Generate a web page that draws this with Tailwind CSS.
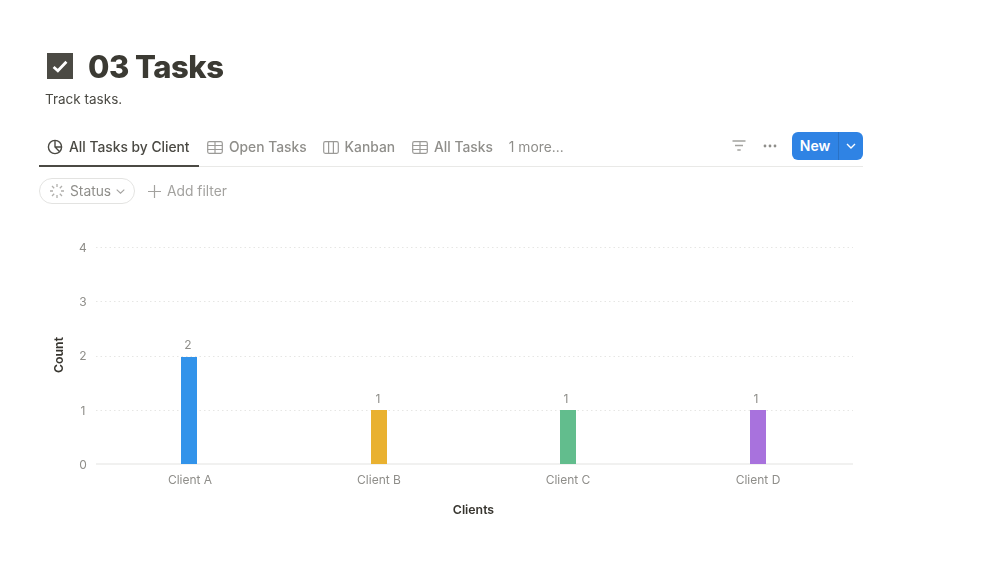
<!DOCTYPE html>
<html lang="en">
<head>
  <meta charset="UTF-8" />
  <meta name="viewport" content="width=device-width, initial-scale=1.0" />
  <title>03 Tasks</title>
  <script src="https://cdn.jsdelivr.net/npm/@tailwindcss/browser@4"></script>
</head>
<body class="bg-white font-['Inter',sans-serif] text-[#37352f] h-[566px] w-[1005px] overflow-hidden">
  <div class="w-[824px] ml-[39px] pt-[47px] blur-[0.4px]">

    <!-- title -->
    <div class="flex items-center h-[38px] pl-[8px] gap-[15px]">
      <div class="w-[26px] h-[26px] bg-[#4b4a44] flex items-center justify-center">
        <svg width="18" height="15" viewBox="0 0 16 14" fill="none" stroke="#fff" stroke-width="2.6"><path d="M2 7.5 L6 11 L14 2.5" /></svg>
      </div>
      <h1 class="text-[31px] font-extrabold leading-none tracking-[-0.5px] text-[#3b3a33]">03 Tasks</h1>
    </div>
    <p class="text-[13.5px] leading-5 ml-[6px] mt-[4px] text-[#4a4943]">Track tasks.</p>

    <!-- tabs -->
    <div class="flex items-center justify-between h-[38px] mt-[20px] border-b border-[#e9e9e7]">
      <div class="flex items-center h-full text-[13.8px] text-[#8f8e8a] font-medium">
        <div class="flex items-center gap-[6px] h-full w-[160px] pl-[8px] border-b-2 border-[#4b4a44] text-[#4a4943] mb-[-1px]">
          <svg width="16" height="16" viewBox="0 0 16 16" fill="none" stroke="#4a4943" stroke-width="1.4"><circle cx="8" cy="8" r="6.6" /><path d="M8 1.4 V8 L12.7 12.7 M8 8 H14.6" /></svg>
          <span>All Tasks by Client</span>
        </div>
        <div class="flex items-center gap-[6px] ml-[8px]">
          <svg width="16" height="13" viewBox="0 0 16 13" fill="none" stroke="#9b9a97" stroke-width="1.2"><rect x="0.7" y="0.7" width="14.6" height="11.6" rx="1.5" /><path d="M0.7 4.5 H15.3 M0.7 8.5 H15.3 M8 0.7 V12.3" /></svg>
          <span>Open Tasks</span>
        </div>
        <div class="flex items-center gap-[6px] ml-[16px]">
          <svg width="16" height="13" viewBox="0 0 16 13" fill="none" stroke="#9b9a97" stroke-width="1.2"><rect x="0.7" y="0.7" width="14.6" height="11.6" rx="1.5" /><path d="M5.6 0.7 V12.3 M10.4 0.7 V12.3" /></svg>
          <span>Kanban</span>
        </div>
        <div class="flex items-center gap-[6px] ml-[17px]">
          <svg width="16" height="13" viewBox="0 0 16 13" fill="none" stroke="#9b9a97" stroke-width="1.2"><rect x="0.7" y="0.7" width="14.6" height="11.6" rx="1.5" /><path d="M0.7 4.5 H15.3 M0.7 8.5 H15.3 M8 0.7 V12.3" /></svg>
          <span>All Tasks</span>
        </div>
        <span class="ml-[16px] font-normal">1 more...</span>
      </div>

      <div class="flex items-center mb-[4px]">
        <svg width="14" height="11" viewBox="0 0 14 11" fill="none" stroke="#a3a29f" stroke-width="1.3"><path d="M0.5 1 H13.5 M3 5.5 H11 M5.3 10 H8.7" /></svg>
        <svg class="ml-[17px]" width="14" height="4" viewBox="0 0 14 4" fill="#8f8e8a"><circle cx="2" cy="2" r="1.4" /><circle cx="7" cy="2" r="1.4" /><circle cx="12" cy="2" r="1.4" /></svg>
        <div class="flex h-[28px] ml-[15px] rounded-[6px] bg-[#2f83e4] text-white">
          <div class="w-[47px] flex items-center justify-center text-[14px] font-semibold border-r border-[#2a72c6]">New</div>
          <div class="w-[24px] flex items-center justify-center">
            <svg width="10" height="6" viewBox="0 0 10 6" fill="none" stroke="#fff" stroke-width="1.4"><path d="M1 1 L5 5 L9 1" /></svg>
          </div>
        </div>
      </div>
    </div>

    <!-- filters -->
    <div class="flex items-center mt-[11px] h-[26px] text-[13.8px] text-[#9b9a97]">
      <div class="flex items-center h-[26px] w-[96px] pl-[9px] gap-[5px] rounded-full border border-[#e3e3e1]">
        <svg width="16" height="16" viewBox="0 0 16 16" fill="none" stroke="#b0afac" stroke-width="1.3"><path d="M8 1 V4 M8 12 V15 M1 8 H4 M12 8 H15 M3 3 L5.2 5.2 M10.8 10.8 L13 13 M3 13 L5.2 10.8 M10.8 5.2 L13 3" /></svg>
        <span class="text-[#8f8e8a]">Status</span>
        <svg width="9" height="5" viewBox="0 0 9 5" fill="none" stroke="#a3a29f" stroke-width="1.1"><path d="M0.7 0.7 L4.5 4.2 L8.3 0.7" /></svg>
      </div>
      <div class="flex items-center ml-[13px] gap-[6px] text-[#a3a29f]">
        <svg width="13" height="13" viewBox="0 0 13 13" fill="none" stroke="#a3a29f" stroke-width="1.2"><path d="M6.5 0 V13 M0 6.5 H13" /></svg>
        <span>Add filter</span>
      </div>
    </div>

    <!-- chart -->
    <svg class="block ml-[-39px] mt-[26px]" width="900" height="320" viewBox="0 230 900 320" font-family="Inter, sans-serif">
      <g stroke="#e6e6e4" stroke-width="1" stroke-dasharray="1.5 3">
        <path d="M96 247.5 H853 M96 301.5 H853 M96 356.5 H853 M96 410.5 H853" />
      </g>
      <path d="M96 464 H853" stroke="#e3e3e1" stroke-width="1.2" />

      <g font-size="12" fill="#8f8e8a" text-anchor="middle">
        <text x="83" y="252">4</text>
        <text x="83" y="306">3</text>
        <text x="83" y="360">2</text>
        <text x="83" y="415">1</text>
        <text x="83" y="469">0</text>
      </g>

      <rect x="181" y="357" width="16" height="107" fill="#3293ea" />
      <rect x="371" y="410" width="16" height="54" fill="#e9b130" />
      <rect x="560" y="410" width="16" height="54" fill="#62bd8d" />
      <rect x="750" y="410" width="16" height="54" fill="#a872dd" />

      <g font-size="12" fill="#8f8e8a" text-anchor="middle">
        <text x="188" y="349">2</text>
        <text x="378" y="403">1</text>
        <text x="566" y="403">1</text>
        <text x="756" y="403">1</text>
        <text x="190" y="484">Client A</text>
        <text x="379" y="484">Client B</text>
        <text x="568" y="484">Client C</text>
        <text x="758" y="484">Client D</text>
      </g>

      <g font-size="12.3" font-weight="600" fill="#37352f" text-anchor="middle">
        <text x="473.5" y="514">Clients</text>
        <text transform="translate(63 355) rotate(-90)">Count</text>
      </g>
    </svg>
  </div>
</body>
</html>
